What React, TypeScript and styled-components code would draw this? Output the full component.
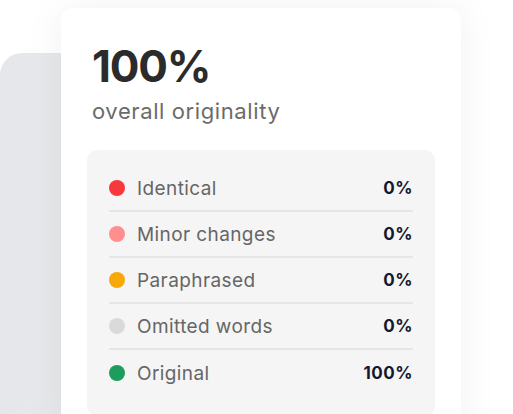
import React from 'react';
import styled, { createGlobalStyle } from 'styled-components';

const GlobalStyle = createGlobalStyle`
  html, body {
    margin: 0;
    padding: 0;
    background: #ffffff;
  }
  body {
    font-family: 'Inter', 'Noto Sans', sans-serif;
  }
`;

type Segment = {
  label: string;
  value: string;
  color: string;
};

const segments: Segment[] = [
  { label: 'Identical', value: '0%', color: '#f7393d' },
  { label: 'Minor changes', value: '0%', color: '#ff8f8f' },
  { label: 'Paraphrased', value: '0%', color: '#f7a80a' },
  { label: 'Omitted words', value: '0%', color: '#dadada' },
  { label: 'Original', value: '100%', color: '#1e9c5b' },
];

export default function App() {
  return (
    <>
      <GlobalStyle />
      <Stage>
        <BackCard />
        <ScoreCard>
          <Header>
            <Score>100%</Score>
            <Caption>overall originality</Caption>
          </Header>
          <Breakdown>
            {segments.map((s) => (
              <Row key={s.label}>
                <Dot $color={s.color} />
                <Label>{s.label}</Label>
                <Value>{s.value}</Value>
              </Row>
            ))}
          </Breakdown>
        </ScoreCard>
      </Stage>
    </>
  );
}

const Stage = styled.div`
  display: grid;
  grid-template-columns: 61px 400px 1fr;
  grid-template-rows: 1fr;
  height: 414px;
  overflow: hidden;
`;

const BackCard = styled.div`
  grid-column: 1 / 3;
  grid-row: 1;
  margin-top: 53px;
  height: 420px;
  border-radius: 22px;
  background: linear-gradient(90deg, #e6e7ea 0%, #eeeff1 100%);
`;

const ScoreCard = styled.section`
  grid-column: 2;
  grid-row: 1;
  z-index: 1;
  margin-top: 8px;
  height: 430px;
  box-sizing: border-box;
  padding: 36px 26px 0;
  background: #ffffff;
  border-radius: 12px;
  box-shadow: 0 0 40px rgba(20, 20, 40, 0.06);
`;

const Header = styled.header`
  display: flex;
  flex-direction: column;
  padding-left: 5px;
  margin-bottom: 26px;
`;

const Score = styled.h1`
  margin: 0;
  font-size: 44px;
  line-height: 44px;
  font-weight: 700;
  color: #2b2b2b;
  letter-spacing: -1.2px;
`;

const Caption = styled.p`
  margin: 10px 0 0;
  font-size: 22px;
  line-height: 26px;
  font-weight: 400;
  color: #6b6b6b;
  letter-spacing: 0.6px;
`;

const Breakdown = styled.div`
  display: flex;
  flex-direction: column;
  padding: 16px 22px 20px;
  background: #f5f5f5;
  border-radius: 10px;
`;

const Row = styled.div`
  display: flex;
  align-items: center;
  height: 46px;
  border-bottom: 2px solid #e6e6e6;
  box-sizing: border-box;

  &:last-child {
    border-bottom: none;
  }
`;

const Dot = styled.span<{ $color: string }>`
  width: 16px;
  height: 16px;
  border-radius: 50%;
  background: ${(p) => p.$color};
  flex-shrink: 0;
`;

const Label = styled.span`
  margin-left: 12px;
  flex: 1;
  font-size: 19px;
  letter-spacing: 0.4px;
  color: #666666;
`;

const Value = styled.span`
  font-size: 17px;
  font-weight: 700;
  letter-spacing: 0.5px;
  color: #141a2e;
`;
